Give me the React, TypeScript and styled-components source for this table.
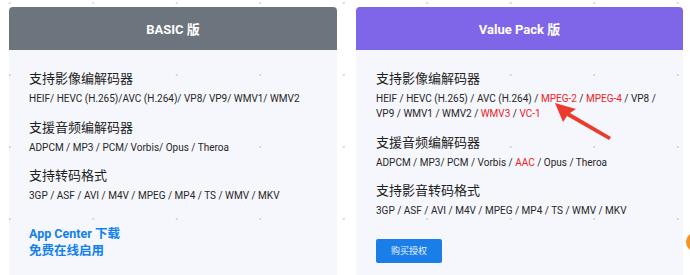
import React from 'react';
import styled, { createGlobalStyle } from 'styled-components';

const GlobalStyle = createGlobalStyle`
  html, body {
    margin: 0;
    padding: 0;
    background: #fff;
    font-family: Roboto, "Noto Sans CJK SC", sans-serif;
  }
`;

const Page = styled.div`
  position: relative;
  height: 275px;
  overflow: hidden;
  padding: 7px 7px 0 9px;
  box-sizing: border-box;
  display: grid;
  grid-template-columns: 328px 327px;
  column-gap: 19px;
`;

const Card = styled.div`
  background: #f6f7fc;
  border-radius: 4px 4px 0 0;
  height: 300px;
  display: flex;
  flex-direction: column;
`;

const Header = styled.div<{ $bg: string }>`
  height: 43px;
  background: ${p => p.$bg};
  border-radius: 4px 4px 0 0;
  display: flex;
  align-items: center;
  justify-content: center;
  color: #fff;
  font-size: 13px;
  font-weight: 700;
`;

const Body = styled.div`
  padding: 19px 20px 0 20px;
  display: flex;
  flex-direction: column;
`;

const Title = styled.div`
  font-size: 13px;
  color: #1e1e1e;
  line-height: 20px;
  margin-bottom: 2px;
`;

const List = styled.div`
  font-size: 10px;
  color: #262626;
  line-height: 15px;
  margin-bottom: 11.5px;
`;

const New = styled.span`
  color: #f0201c;
`;

const Links = styled.div`
  margin-top: 10px;
  display: flex;
  flex-direction: column;
  color: #1280f0;
  font-size: 12.5px;
  font-weight: 700;
  line-height: 17px;
`;

const BuyButton = styled.button`
  margin-top: 9px;
  width: 66px;
  height: 24px;
  border: none;
  border-radius: 2px;
  background: #1a7ee8;
  color: #e8f1ff;
  font-family: Roboto, "Noto Sans CJK SC", sans-serif;
  font-size: 9px;
  padding: 0;
`;

const Dots = styled.div`
  position: absolute;
  inset: 0;
  pointer-events: none;
  background-image: radial-gradient(circle, rgba(150, 150, 160, 0.35) 0.7px, transparent 1.1px);
  background-size: 83.5px 72px;
  background-position: -32px -33px;
`;

const Arrow = styled.svg`
  position: absolute;
  left: 545px;
  top: 98px;
  pointer-events: none;
`;

const Floater = styled.div`
  position: absolute;
  left: 686px;
  top: 232px;
  width: 20px;
  height: 20px;
  border-radius: 50%;
  background: #f7941d;
`;

export default function App() {
  return (
    <>
      <GlobalStyle />
      <Page>
        <Card>
          <Header $bg="#6c757d">BASIC 版</Header>
          <Body>
            <Title>支持影像编解码器</Title>
            <List>HEIF/ HEVC (H.265)/AVC (H.264)/ VP8/ VP9/ WMV1/ WMV2</List>
            <Title>支援音频编解码器</Title>
            <List>ADPCM / MP3 / PCM/ Vorbis/ Opus / Theroa</List>
            <Title>支持转码格式</Title>
            <List>3GP / ASF / AVI / M4V / MPEG / MP4 / TS / WMV / MKV</List>
            <Links>
              <span>App Center 下载</span>
              <span>免费在线启用</span>
            </Links>
          </Body>
        </Card>
        <Card>
          <Header $bg="#7f66e9">Value Pack 版</Header>
          <Body>
            <Title>支持影像编解码器</Title>
            <List>
              HEIF / HEVC (H.265) / AVC (H.264) / <New>MPEG-2</New> / <New>MPEG-4</New> / VP8 /
              VP9 / WMV1 / WMV2 / <New>WMV3</New> / <New>VC-1</New>
            </List>
            <Title>支援音频编解码器</Title>
            <List>
              ADPCM / MP3/ PCM / Vorbis / <New>AAC</New> / Opus / Theroa
            </List>
            <Title>支持影音转码格式</Title>
            <List>3GP / ASF / AVI / M4V / MPEG / MP4 / TS / WMV / MKV</List>
            <div>
              <BuyButton>购买授权</BuyButton>
            </div>
          </Body>
        </Card>
        <Dots />
        <Arrow width="70" height="45" viewBox="0 0 70 45">
          <path d="M10 5 L31 11 L25 15 L66 39 L64 42 L22 18 L18 24 Z" fill="#ea3b2c" />
        </Arrow>
        <Floater />
      </Page>
    </>
  );
}
